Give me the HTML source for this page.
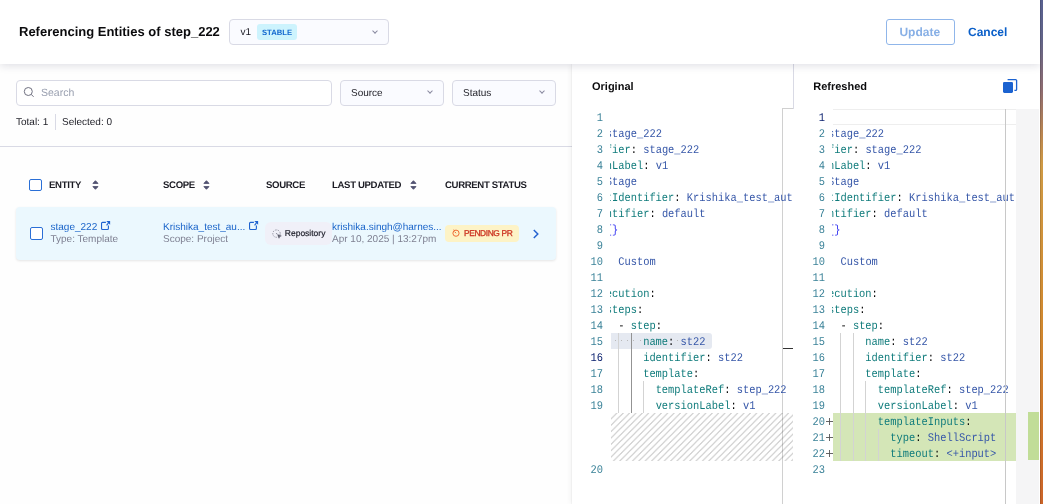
<!DOCTYPE html>
<html><head><meta charset="utf-8">
<style>
*{box-sizing:border-box;margin:0;padding:0}
html,body{text-rendering:geometricPrecision;width:1043px;height:504px;overflow:hidden;background:#fefefe;font-family:"Liberation Sans",sans-serif;position:relative}
.a{position:absolute;white-space:nowrap}
#hdr{left:0;top:0;width:1040px;height:64px;background:#fff;box-shadow:0 2px 8px rgba(20,20,60,.13);z-index:5}
.title{left:19px;top:24px;font-size:13px;font-weight:bold;color:#0b0b0d;line-height:16px}
.sel{left:229px;top:19px;width:160px;height:26px;border:1px solid #d9dae5;border-radius:4px;background:#fafbff}
.chev{width:4px;height:4px;border-right:1px solid #8a8aa0;border-bottom:1px solid #8a8aa0;transform:rotate(45deg)}
.btn-upd{left:886px;top:19px;width:69px;height:26px;border:1px solid #90b6ea;border-radius:3px;color:#88b0e6;text-indent:-1.5px;font-size:12px;font-weight:bold;text-align:center;line-height:24px}
.cancel{left:968px;top:25.2px;color:#0a5fc9;font-size:12px;font-weight:bold;line-height:14px}
#strip{left:1040px;top:0;width:3px;height:504px;background:linear-gradient(#586090 0px,#626488 40px,#8e6c70 90px,#bb8650 135px,#cf9a45 165px,#d0882f 325px,#cb6428 504px);box-shadow:inset 1px 0 0 rgba(0,0,0,.12);z-index:10}
/* left panel */
.search{left:16px;top:80px;width:316px;height:26px;border:1px solid #d9dae5;border-radius:4px;background:#fff}
.dd{height:26px;border:1px solid #d9dae5;border-radius:4px;background:#fafbff;top:80px}
.lbl{margin-top:.3px;font-size:10px;color:#22222a}
.hline{left:0;top:146px;width:572px;height:1px;background:#d9dae5}
.th{top:180.2px;font-size:9.6px;font-weight:bold;color:#1c1c24;line-height:11px;letter-spacing:-0.35px}
.cb{width:13px;height:13px;border:1.5px solid #2a6fd6;border-radius:2px;background:#fff}
.row{left:16px;top:207px;width:540px;height:52.5px;background:#ebf8fe;border-radius:4px;box-shadow:0 1px 2.5px rgba(0,0,0,.1)}
.link{color:#1a64c9;font-size:10px;line-height:12px;margin-top:.6px}
.sub{color:#7f8092;font-size:10px;line-height:12px;margin-top:.5px}
.sort{width:7px;height:10px}
/* right panel */
#rp{left:572px;top:64px;width:468px;height:440px;background:#fff;box-shadow:-1px 0 0 rgba(0,0,0,.03),-2px 0 5px rgba(0,0,0,.045)}
.ph{font-size:11px;font-weight:bold;color:#0b0b0d;line-height:13px;margin-top:.5px}
.clip{overflow:hidden}
.cl{text-rendering:geometricPrecision;position:absolute;left:0;white-space:pre;font-family:"Liberation Mono",monospace;font-size:10.4px;line-height:16px;height:16px;padding-top:2px;color:#000;transform:scaleY(1.13);transform-origin:0 12.76px}
.ln{text-rendering:geometricPrecision;font-family:"Liberation Mono",monospace;font-size:10.4px;line-height:16px;padding-top:2px;color:#3a8298;text-align:right;width:40px;height:16px;transform:scaleY(1.13);transform-origin:0 12.76px}
.ln.act{color:#0b216f}
.k{color:#0f7b7b}.v{color:#3556a8}.p{color:#000}.b{color:#3131f0}
.ig{position:absolute;width:1px;background:#d3d3d3}
.ig.act{background:#939393}
.hatch{background-image:linear-gradient(-45deg,rgba(34,34,34,.2) 12.5%,transparent 12.5%,transparent 50%,rgba(34,34,34,.2) 50%,rgba(34,34,34,.2) 62.5%,transparent 62.5%,transparent 100%);background-size:6.36px 6.36px}
</style></head><body><div id="root" style="position:absolute;left:0;top:0;width:1043px;height:504px;will-change:transform">
<div id="hdr" class="a">
  <div class="a title">Referencing Entities of step_222</div>
  <div class="a sel">
    <div class="a" style="left:10.5px;top:6.9px;font-size:10px;color:#1a1a24;line-height:12px">v1</div>
    <div class="a" style="left:27px;top:4px;width:40px;height:16px;background:#cdf3fd;border-radius:3px;color:#1368cf;font-size:7.7px;font-weight:bold;text-align:center;line-height:17px">STABLE</div>
    <div class="a chev" style="left:142.8px;top:8.5px"></div>
  </div>
  <div class="a btn-upd">Update</div>
  <div class="a cancel">Cancel</div>
</div>
<div id="strip" class="a"></div>

<!-- left panel -->
<div class="a search">
  <svg class="a" style="left:6px;top:5px" width="12" height="12" viewBox="0 0 12 12"><circle cx="5.3" cy="5.5" r="4" fill="none" stroke="#6f7080" stroke-width="1"/><path d="M8.2 8.4 L10.6 10.8" stroke="#6f7080" stroke-width="1"/></svg>
  <div class="a" style="left:24px;top:6.1px;font-size:10.5px;color:#9aa0b0;line-height:13px">Search</div>
</div>
<div class="a dd" style="left:340px;width:104px">
  <div class="a lbl" style="left:10px;top:6px;line-height:13px">Source</div>
  <div class="a chev" style="left:87px;top:8px"></div>
</div>
<div class="a dd" style="left:452px;width:104px">
  <div class="a lbl" style="left:10px;top:6px;line-height:13px">Status</div>
  <div class="a chev" style="left:87px;top:8px"></div>
</div>
<div class="a" style="left:16px;top:116.8px;font-size:10px;color:#22222a;line-height:12px">Total: 1</div>
<div class="a" style="left:55px;top:114px;width:1px;height:16px;background:#d9dae5"></div>
<div class="a" style="left:62px;top:116.8px;font-size:10px;color:#22222a;line-height:12px">Selected: 0</div>
<div class="a hline"></div>

<div class="a cb" style="left:29px;top:179px;height:12px;width:12.7px"></div>
<div class="a th" style="left:49px">ENTITY</div>
<svg class="a sort" style="left:91.5px;top:180px" width="7" height="10" viewBox="0 0 7 10"><path d="M3.45 0.7 L6 3.4 H0.9 Z M3.45 9.3 L6 6.6 H0.9 Z" fill="#505170" stroke="#505170" stroke-width="0.9" stroke-linejoin="round"/></svg>
<div class="a th" style="left:163px">SCOPE</div>
<svg class="a sort" style="left:202.5px;top:180px" width="7" height="10" viewBox="0 0 7 10"><path d="M3.45 0.7 L6 3.4 H0.9 Z M3.45 9.3 L6 6.6 H0.9 Z" fill="#505170" stroke="#505170" stroke-width="0.9" stroke-linejoin="round"/></svg>
<div class="a th" style="left:266px">SOURCE</div>
<div class="a th" style="left:332px">LAST UPDATED</div>
<svg class="a sort" style="left:409.5px;top:180px" width="7" height="10" viewBox="0 0 7 10"><path d="M3.45 0.7 L6 3.4 H0.9 Z M3.45 9.3 L6 6.6 H0.9 Z" fill="#505170" stroke="#505170" stroke-width="0.9" stroke-linejoin="round"/></svg>
<div class="a th" style="left:445px">CURRENT STATUS</div>

<div class="a row"></div>
<div class="a cb" style="left:30px;top:227px"></div>
<div class="a link" style="left:50.5px;top:221px">stage_222</div>
<svg class="a" style="left:100px;top:220px" width="11" height="11" viewBox="0 0 11 11"><path d="M5.9 2.35 H2.55 Q1.55 2.35 1.55 3.35 V8.55 Q1.55 9.55 2.55 9.55 H7.4 Q8.4 9.55 8.4 8.55 V5.4" fill="none" stroke="#1f63d0" stroke-width="1.1"/><path d="M6.3 0.9 H10.1 V4.8 Z" fill="#1f63d0"/><path d="M6.6 5.4 L9.3 1.7" stroke="#1f63d0" stroke-width="1.1"/></svg>
<div class="a sub" style="left:50.5px;top:233px">Type: Template</div>
<div class="a link" style="left:163px;top:221px">Krishika_test_au...</div>
<svg class="a" style="left:248px;top:220px" width="11" height="11" viewBox="0 0 11 11"><path d="M5.9 2.35 H2.55 Q1.55 2.35 1.55 3.35 V8.55 Q1.55 9.55 2.55 9.55 H7.4 Q8.4 9.55 8.4 8.55 V5.4" fill="none" stroke="#1f63d0" stroke-width="1.1"/><path d="M6.3 0.9 H10.1 V4.8 Z" fill="#1f63d0"/><path d="M6.6 5.4 L9.3 1.7" stroke="#1f63d0" stroke-width="1.1"/></svg>
<div class="a sub" style="left:163px;top:233px">Scope: Project</div>
<div class="a" style="left:265px;top:222px;width:66.5px;height:22.5px;background:#f0f0f8;border-radius:6px"></div>
<svg class="a" style="left:271.5px;top:228.5px" width="10" height="10" viewBox="0 0 10 10"><circle cx="4.5" cy="4.6" r="3.7" fill="none" stroke="#8a8b98" stroke-width="0.9" stroke-dasharray="1.5 1.1"/><circle cx="4.6" cy="4.6" r="0.7" fill="#8a8b98"/><path d="M5.6 5.6 L9.3 6.9 L7.7 7.6 L7 9.3 Z" fill="#585968" stroke="#585968" stroke-width="0.5" stroke-linejoin="round"/></svg>
<div class="a" style="left:284.8px;top:227.8px;font-size:8.5px;color:#22232e;line-height:10px;-webkit-text-stroke:0.2px #22232e">Repository</div>
<div class="a link" style="left:332px;top:221px">krishika.singh@harnes...</div>
<div class="a sub" style="left:332px;top:233px">Apr 10, 2025 | 13:27pm</div>
<div class="a" style="left:445px;top:225px;width:74px;height:17px;background:#fdf3c6;border-radius:4px"></div>
<svg class="a" style="left:451.5px;top:229px" width="8" height="8" viewBox="0 0 8 8"><circle cx="4" cy="4.2" r="3.1" fill="none" stroke="#ef6c35" stroke-width="1"/><path d="M1.6 0.8 L2.8 1.6 M4 4.2 L2.6 2.6" stroke="#ef6c35" stroke-width="1"/></svg>
<div class="a" style="left:464px;top:228px;font-size:8.4px;letter-spacing:-0.38px;color:#cc3422;line-height:10px;-webkit-text-stroke:0.3px #cc3422">PENDING PR</div>
<svg class="a" style="left:532px;top:228.5px" width="8" height="10" viewBox="0 0 8 10"><path d="M1.8 1 L5.8 5 L1.8 9" fill="none" stroke="#2563d0" stroke-width="1.5"/></svg>

<!-- right panel -->
<div id="rp" class="a"></div>
<div class="a ph" style="left:592px;top:80px">Original</div>
<div class="a ph" style="left:813.2px;top:80px">Refreshed</div>
<div class="a" style="left:793px;top:64px;width:1px;height:45px;background:#d9dae5"></div>
<svg class="a" style="left:1002px;top:78px" width="17" height="16" viewBox="0 0 17 16"><path d="M5.6 1.6 h8 a1 1 0 0 1 1 1 v8.8 a1 1 0 0 1 -1 1 h-1.2" fill="none" stroke="#1b62d0" stroke-width="1.3"/><rect x="1" y="3.9" width="10" height="11" rx="1.3" fill="#1b62d0"/></svg>
<div class="a" style="left:782px;top:108px;width:11px;height:1px;background:#d0d0d0"></div>
<div class="a" style="left:782px;top:108px;width:1px;height:396px;background:#d0d0d0"></div>
<div class="a" style="left:783px;top:348px;width:10px;height:1px;background:#333"></div>
<div class="a" style="left:1016px;top:109px;width:23px;height:395px;background:#f5f5f6"></div>
<div class="a" style="left:1028px;top:412px;width:11px;height:48px;background:#c1dd98"></div>
<div class="a" style="left:833px;top:109px;width:183px;height:16px;border-top:1px solid #eeeeee;border-bottom:1px solid #eeeeee"></div>
<div class="a" style="left:611px;top:333px;width:101px;height:16px;background:#e5e9f1;border-radius:0 3px 3px 0"></div>
<div class="a hatch" style="left:611px;top:413px;width:182px;height:48px"></div>
<div class="a" style="left:833px;top:413px;width:183px;height:48px;background:#d4e6b7"></div>
<div class="ig" style="left:618.0px;top:333px;height:80px"></div>
<div class="ig act" style="left:631.0px;top:333px;height:80px"></div>
<div class="ig" style="left:643.0px;top:381px;height:32px"></div>
<div class="ig" style="left:840.0px;top:333px;height:128px"></div>
<div class="ig" style="left:853.0px;top:333px;height:128px"></div>
<div class="ig" style="left:865.0px;top:381px;height:80px"></div>
<div class="ig" style="left:878.0px;top:429px;height:32px"></div>
<div class="a" style="left:614.6px;top:340px;width:1.2px;height:1.2px;background:#b8b8b8"></div>
<div class="a" style="left:620.8px;top:340px;width:1.2px;height:1.2px;background:#b8b8b8"></div>
<div class="a" style="left:627.1px;top:340px;width:1.2px;height:1.2px;background:#b8b8b8"></div>
<div class="a" style="left:633.3px;top:340px;width:1.2px;height:1.2px;background:#b8b8b8"></div>
<div class="a" style="left:639.6px;top:340px;width:1.2px;height:1.2px;background:#b8b8b8"></div>
<div class="a" style="left:677.0px;top:340px;width:1.2px;height:1.2px;background:#b8b8b8"></div>
<div class="a ln" style="top:109px;left:563px">1</div>
<div class="a ln" style="top:125px;left:563px">2</div>
<div class="a ln" style="top:141px;left:563px">3</div>
<div class="a ln" style="top:157px;left:563px">4</div>
<div class="a ln" style="top:173px;left:563px">5</div>
<div class="a ln" style="top:189px;left:563px">6</div>
<div class="a ln" style="top:205px;left:563px">7</div>
<div class="a ln" style="top:221px;left:563px">8</div>
<div class="a ln" style="top:237px;left:563px">9</div>
<div class="a ln" style="top:253px;left:563px">10</div>
<div class="a ln" style="top:269px;left:563px">11</div>
<div class="a ln" style="top:285px;left:563px">12</div>
<div class="a ln" style="top:301px;left:563px">13</div>
<div class="a ln" style="top:317px;left:563px">14</div>
<div class="a ln" style="top:333px;left:563px">15</div>
<div class="a ln act" style="top:349px;left:563px">16</div>
<div class="a ln" style="top:365px;left:563px">17</div>
<div class="a ln" style="top:381px;left:563px">18</div>
<div class="a ln" style="top:397px;left:563px">19</div>
<div class="a ln" style="top:461px;left:563px">20</div>
<div class="a clip" style="left:610px;top:109px;width:182px;height:395px">
<div class="a" style="left:-54.16px;top:0">
<div class="cl" style="top:0px"><span class="k">template</span><span class="p">:</span></div>
<div class="cl" style="top:16px">&nbsp;&nbsp;<span class="k">name</span><span class="p">:&nbsp;</span><span class="v">stage_222</span></div>
<div class="cl" style="top:32px">&nbsp;&nbsp;<span class="k">identifier</span><span class="p">:&nbsp;</span><span class="v">stage_222</span></div>
<div class="cl" style="top:48px">&nbsp;&nbsp;<span class="k">versionLabel</span><span class="p">:&nbsp;</span><span class="v">v1</span></div>
<div class="cl" style="top:64px">&nbsp;&nbsp;<span class="k">type</span><span class="p">:&nbsp;</span><span class="v">Stage</span></div>
<div class="cl" style="top:80px">&nbsp;&nbsp;<span class="k">projectIdentifier</span><span class="p">:&nbsp;</span><span class="v">Krishika_test_automation</span></div>
<div class="cl" style="top:96px">&nbsp;&nbsp;<span class="k">orgIdentifier</span><span class="p">:&nbsp;</span><span class="v">default</span></div>
<div class="cl" style="top:112px">&nbsp;&nbsp;<span class="k">tags</span><span class="p">:&nbsp;</span><span class="b">{}</span></div>
<div class="cl" style="top:128px">&nbsp;&nbsp;<span class="k">spec</span><span class="p">:</span></div>
<div class="cl" style="top:144px">&nbsp;&nbsp;&nbsp;&nbsp;<span class="k">type</span><span class="p">:&nbsp;</span><span class="v">Custom</span></div>
<div class="cl" style="top:160px">&nbsp;&nbsp;&nbsp;&nbsp;<span class="k">spec</span><span class="p">:</span></div>
<div class="cl" style="top:176px">&nbsp;&nbsp;&nbsp;&nbsp;&nbsp;&nbsp;<span class="k">execution</span><span class="p">:</span></div>
<div class="cl" style="top:192px">&nbsp;&nbsp;&nbsp;&nbsp;&nbsp;&nbsp;&nbsp;&nbsp;<span class="k">steps</span><span class="p">:</span></div>
<div class="cl" style="top:208px">&nbsp;&nbsp;&nbsp;&nbsp;&nbsp;&nbsp;&nbsp;&nbsp;&nbsp;&nbsp;<span class="p">-&nbsp;</span><span class="k">step</span><span class="p">:</span></div>
<div class="cl" style="top:224px">&nbsp;&nbsp;&nbsp;&nbsp;&nbsp;&nbsp;&nbsp;&nbsp;&nbsp;&nbsp;&nbsp;&nbsp;&nbsp;&nbsp;<span class="k">name</span><span class="p">:&nbsp;</span><span class="v">st22</span></div>
<div class="cl" style="top:240px">&nbsp;&nbsp;&nbsp;&nbsp;&nbsp;&nbsp;&nbsp;&nbsp;&nbsp;&nbsp;&nbsp;&nbsp;&nbsp;&nbsp;<span class="k">identifier</span><span class="p">:&nbsp;</span><span class="v">st22</span></div>
<div class="cl" style="top:256px">&nbsp;&nbsp;&nbsp;&nbsp;&nbsp;&nbsp;&nbsp;&nbsp;&nbsp;&nbsp;&nbsp;&nbsp;&nbsp;&nbsp;<span class="k">template</span><span class="p">:</span></div>
<div class="cl" style="top:272px">&nbsp;&nbsp;&nbsp;&nbsp;&nbsp;&nbsp;&nbsp;&nbsp;&nbsp;&nbsp;&nbsp;&nbsp;&nbsp;&nbsp;&nbsp;&nbsp;<span class="k">templateRef</span><span class="p">:&nbsp;</span><span class="v">step_222</span></div>
<div class="cl" style="top:288px">&nbsp;&nbsp;&nbsp;&nbsp;&nbsp;&nbsp;&nbsp;&nbsp;&nbsp;&nbsp;&nbsp;&nbsp;&nbsp;&nbsp;&nbsp;&nbsp;<span class="k">versionLabel</span><span class="p">:&nbsp;</span><span class="v">v1</span></div>
</div></div>
<div class="a ln act" style="top:109px;left:785px">1</div>
<div class="a ln" style="top:125px;left:785px">2</div>
<div class="a ln" style="top:141px;left:785px">3</div>
<div class="a ln" style="top:157px;left:785px">4</div>
<div class="a ln" style="top:173px;left:785px">5</div>
<div class="a ln" style="top:189px;left:785px">6</div>
<div class="a ln" style="top:205px;left:785px">7</div>
<div class="a ln" style="top:221px;left:785px">8</div>
<div class="a ln" style="top:237px;left:785px">9</div>
<div class="a ln" style="top:253px;left:785px">10</div>
<div class="a ln" style="top:269px;left:785px">11</div>
<div class="a ln" style="top:285px;left:785px">12</div>
<div class="a ln" style="top:301px;left:785px">13</div>
<div class="a ln" style="top:317px;left:785px">14</div>
<div class="a ln" style="top:333px;left:785px">15</div>
<div class="a ln" style="top:349px;left:785px">16</div>
<div class="a ln" style="top:365px;left:785px">17</div>
<div class="a ln" style="top:381px;left:785px">18</div>
<div class="a ln" style="top:397px;left:785px">19</div>
<div class="a ln" style="top:413px;left:785px">20</div>
<div class="a ln" style="top:429px;left:785px">21</div>
<div class="a ln" style="top:445px;left:785px">22</div>
<div class="a ln" style="top:461px;left:785px">23</div>
<svg class="a" style="left:826px;top:418px" width="7" height="7" viewBox="0 0 7 7"><path d="M0 3.5 H7 M3.5 0 V7" stroke="#555" stroke-width="0.9"/></svg>
<svg class="a" style="left:826px;top:434px" width="7" height="7" viewBox="0 0 7 7"><path d="M0 3.5 H7 M3.5 0 V7" stroke="#555" stroke-width="0.9"/></svg>
<svg class="a" style="left:826px;top:450px" width="7" height="7" viewBox="0 0 7 7"><path d="M0 3.5 H7 M3.5 0 V7" stroke="#555" stroke-width="0.9"/></svg>
<div class="a clip" style="left:832px;top:109px;width:183.3px;height:395px">
<div class="a" style="left:-53.96px;top:0">
<div class="cl" style="top:0px"><span class="k">template</span><span class="p">:</span></div>
<div class="cl" style="top:16px">&nbsp;&nbsp;<span class="k">name</span><span class="p">:&nbsp;</span><span class="v">stage_222</span></div>
<div class="cl" style="top:32px">&nbsp;&nbsp;<span class="k">identifier</span><span class="p">:&nbsp;</span><span class="v">stage_222</span></div>
<div class="cl" style="top:48px">&nbsp;&nbsp;<span class="k">versionLabel</span><span class="p">:&nbsp;</span><span class="v">v1</span></div>
<div class="cl" style="top:64px">&nbsp;&nbsp;<span class="k">type</span><span class="p">:&nbsp;</span><span class="v">Stage</span></div>
<div class="cl" style="top:80px">&nbsp;&nbsp;<span class="k">projectIdentifier</span><span class="p">:&nbsp;</span><span class="v">Krishika_test_automation</span></div>
<div class="cl" style="top:96px">&nbsp;&nbsp;<span class="k">orgIdentifier</span><span class="p">:&nbsp;</span><span class="v">default</span></div>
<div class="cl" style="top:112px">&nbsp;&nbsp;<span class="k">tags</span><span class="p">:&nbsp;</span><span class="b">{}</span></div>
<div class="cl" style="top:128px">&nbsp;&nbsp;<span class="k">spec</span><span class="p">:</span></div>
<div class="cl" style="top:144px">&nbsp;&nbsp;&nbsp;&nbsp;<span class="k">type</span><span class="p">:&nbsp;</span><span class="v">Custom</span></div>
<div class="cl" style="top:160px">&nbsp;&nbsp;&nbsp;&nbsp;<span class="k">spec</span><span class="p">:</span></div>
<div class="cl" style="top:176px">&nbsp;&nbsp;&nbsp;&nbsp;&nbsp;&nbsp;<span class="k">execution</span><span class="p">:</span></div>
<div class="cl" style="top:192px">&nbsp;&nbsp;&nbsp;&nbsp;&nbsp;&nbsp;&nbsp;&nbsp;<span class="k">steps</span><span class="p">:</span></div>
<div class="cl" style="top:208px">&nbsp;&nbsp;&nbsp;&nbsp;&nbsp;&nbsp;&nbsp;&nbsp;&nbsp;&nbsp;<span class="p">-&nbsp;</span><span class="k">step</span><span class="p">:</span></div>
<div class="cl" style="top:224px">&nbsp;&nbsp;&nbsp;&nbsp;&nbsp;&nbsp;&nbsp;&nbsp;&nbsp;&nbsp;&nbsp;&nbsp;&nbsp;&nbsp;<span class="k">name</span><span class="p">:&nbsp;</span><span class="v">st22</span></div>
<div class="cl" style="top:240px">&nbsp;&nbsp;&nbsp;&nbsp;&nbsp;&nbsp;&nbsp;&nbsp;&nbsp;&nbsp;&nbsp;&nbsp;&nbsp;&nbsp;<span class="k">identifier</span><span class="p">:&nbsp;</span><span class="v">st22</span></div>
<div class="cl" style="top:256px">&nbsp;&nbsp;&nbsp;&nbsp;&nbsp;&nbsp;&nbsp;&nbsp;&nbsp;&nbsp;&nbsp;&nbsp;&nbsp;&nbsp;<span class="k">template</span><span class="p">:</span></div>
<div class="cl" style="top:272px">&nbsp;&nbsp;&nbsp;&nbsp;&nbsp;&nbsp;&nbsp;&nbsp;&nbsp;&nbsp;&nbsp;&nbsp;&nbsp;&nbsp;&nbsp;&nbsp;<span class="k">templateRef</span><span class="p">:&nbsp;</span><span class="v">step_222</span></div>
<div class="cl" style="top:288px">&nbsp;&nbsp;&nbsp;&nbsp;&nbsp;&nbsp;&nbsp;&nbsp;&nbsp;&nbsp;&nbsp;&nbsp;&nbsp;&nbsp;&nbsp;&nbsp;<span class="k">versionLabel</span><span class="p">:&nbsp;</span><span class="v">v1</span></div>
<div class="cl" style="top:304px">&nbsp;&nbsp;&nbsp;&nbsp;&nbsp;&nbsp;&nbsp;&nbsp;&nbsp;&nbsp;&nbsp;&nbsp;&nbsp;&nbsp;&nbsp;&nbsp;<span class="k">templateInputs</span><span class="p">:</span></div>
<div class="cl" style="top:320px">&nbsp;&nbsp;&nbsp;&nbsp;&nbsp;&nbsp;&nbsp;&nbsp;&nbsp;&nbsp;&nbsp;&nbsp;&nbsp;&nbsp;&nbsp;&nbsp;&nbsp;&nbsp;<span class="k">type</span><span class="p">:&nbsp;</span><span class="v">ShellScript</span></div>
<div class="cl" style="top:336px">&nbsp;&nbsp;&nbsp;&nbsp;&nbsp;&nbsp;&nbsp;&nbsp;&nbsp;&nbsp;&nbsp;&nbsp;&nbsp;&nbsp;&nbsp;&nbsp;&nbsp;&nbsp;<span class="k">timeout</span><span class="p">:&nbsp;</span><span class="v">&lt;+input&gt;</span></div>
</div></div>
<div class="a" style="left:1005px;top:109px;width:1px;height:395px;background:#c8c8c8"></div>
</div></body></html>
